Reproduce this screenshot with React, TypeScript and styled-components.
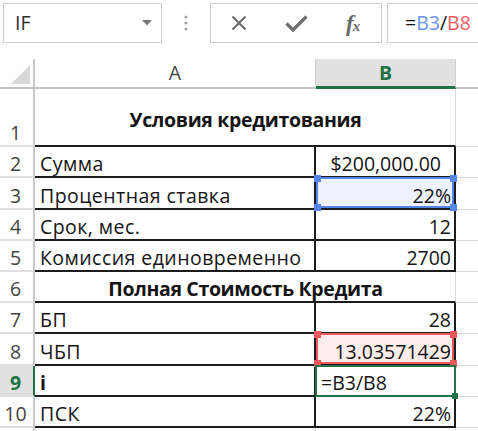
import React from "react";
import styled, { createGlobalStyle } from "styled-components";

type Border = "black" | "grid" | "none";
type Sel = "blue" | "red" | "green";

const GREEN = "#217346";

const GlobalStyle = createGlobalStyle`
  html, body {
    margin: 0;
    padding: 0;
    background: #fff;
    overflow: hidden;
  }
  body {
    font-family: "Open Sans", "Liberation Sans", Arial, sans-serif;
  }
`;

const Page = styled.div`
  width: 478px;
  height: 431px;
  overflow: hidden;
  background: #fff;
  color: #141414;
  font-size: 19.5px;
  line-height: 24px;
`;

const Toolbar = styled.div`
  display: flex;
  align-items: flex-start;
  height: 59px;
  box-sizing: border-box;
  padding: 3px 0 0 3px;
`;

const Box = styled.div`
  box-sizing: border-box;
  height: 40px;
  border: 1.5px solid #cfcfcf;
  display: flex;
  align-items: center;
  background: #fff;
`;

const NameBox = styled(Box)`
  width: 159px;
  flex: none;
  justify-content: space-between;
  padding: 0 9px 0 11px;
  color: #2e2e2e;
`;

const Dots = styled.div`
  width: 48px;
  height: 40px;
  flex: none;
  display: flex;
  align-items: center;
  justify-content: center;
`;

const FxBox = styled(Box)`
  width: 172px;
  flex: none;
`;

const FxSlot = styled.div`
  width: 58px;
  display: flex;
  justify-content: center;
  align-items: center;
  color: #6e6e6e;
`;

const FxText = styled.span`
  font-family: "Liberation Serif", "Times New Roman", serif;
  font-style: italic;
  font-weight: 700;
  font-size: 23px;
  line-height: 1;
  color: #6a6a6a;
  letter-spacing: -1px;
`;

const FxSub = styled.span`
  font-size: 15px;
`;

const FormulaBox = styled(Box)`
  flex: none;
  width: 120px;
  margin-left: 5px;
  padding-left: 17px;
  border-right: none;
`;

const Ref = styled.span<{ $color: string }>`
  color: ${(p) => p.$color};
`;

const Sheet = styled.div`
  display: grid;
  grid-template-columns: 35px 281px 140px 60px;
  grid-template-rows: 30px 58px 31px 32px 31px 31px 31px 31px 32px 31px 31px 31px;
`;

const Corner = styled.div`
  box-sizing: border-box;
  border-right: 2px solid #c8c8c8;
  border-bottom: 2px solid #c4c4c4;
  display: flex;
  align-items: flex-end;
  justify-content: flex-end;
  padding: 0 3px 3px 0;
`;

const ColHead = styled.div<{ $active?: boolean; $last?: boolean }>`
  box-sizing: border-box;
  display: flex;
  align-items: center;
  justify-content: center;
  background: ${(p) => (p.$active ? "#e1e1e1" : "#fff")};
  border-right: ${(p) => (p.$last ? "none" : "1px solid #d0d0d0")};
  border-bottom: ${(p) => (p.$active ? `3px solid ${GREEN}` : "2px solid #c4c4c4")};
  color: ${(p) => (p.$active ? GREEN : "#444")};
  font-weight: ${(p) => (p.$active ? 700 : 400)};
  padding-top: ${(p) => (p.$active ? "1px" : "0")};
`;

const RowHead = styled.div<{ $active?: boolean }>`
  box-sizing: border-box;
  display: flex;
  align-items: flex-end;
  justify-content: center;
  padding: 0 2px 0 0;
  background: ${(p) => (p.$active ? "#e1e1e1" : "#fff")};
  border-right: 2px solid ${(p) => (p.$active ? GREEN : "#c8c8c8")};
  border-bottom: 2px solid #e0e0e0;
  color: ${(p) => (p.$active ? GREEN : "#444")};
  font-weight: ${(p) => (p.$active ? 700 : 400)};
`;

const borderFor = (b?: Border) =>
  b === "black" ? "2px solid #1c1c1c" : b === "grid" ? "1px solid #dadada" : "none";

const Cell = styled.div<{
  $right?: Border;
  $bottom?: Border;
  $align?: "left" | "right" | "center";
  $bold?: boolean;
  $span?: number;
  $bg?: string;
  $center?: boolean;
  $padRight?: number;
  $spacing?: number;
}>`
  position: relative;
  box-sizing: border-box;
  display: flex;
  align-items: ${(p) => (p.$center ? "center" : "flex-end")};
  justify-content: ${(p) =>
    p.$align === "right" ? "flex-end" : p.$align === "center" ? "center" : "flex-start"};
  grid-column: span ${(p) => p.$span ?? 1};
  padding: ${(p) => (p.$center ? "5px" : "0")} ${(p) => p.$padRight ?? 4}px 0 5px;
  background: ${(p) => p.$bg ?? "#fff"};
  border-right: ${(p) => borderFor(p.$right)};
  border-bottom: ${(p) => borderFor(p.$bottom)};
  font-weight: ${(p) => (p.$bold ? 700 : 400)};
  letter-spacing: ${(p) => p.$spacing ?? 0}px;
  white-space: nowrap;
`;

const selColors: Record<Sel, string> = {
  blue: "#5585e8",
  red: "#e9585b",
  green: GREEN,
};

const selFill: Record<Sel, string> = {
  blue: "#edf2fd",
  red: "#fdeded",
  green: "#fff",
};

const Overlay = styled.div<{ $sel: Sel }>`
  position: absolute;
  z-index: 2;
  pointer-events: none;
  top: -1px;
  left: ${(p) => (p.$sel === "green" ? "-1px" : "0")};
  right: ${(p) => (p.$sel === "green" ? "-2px" : "0")};
  bottom: ${(p) => (p.$sel === "green" ? "-2px" : "0")};
  border: 2px solid ${(p) => selColors[p.$sel]};
`;

const Handle = styled.span<{ $sel: Sel; $v: "top" | "bottom"; $h: "left" | "right" }>`
  position: absolute;
  width: ${(p) => (p.$sel === "green" ? 6 : 7)}px;
  height: ${(p) => (p.$sel === "green" ? 6 : 7)}px;
  background: ${(p) => selColors[p.$sel]};
  ${(p) => p.$v}: ${(p) => (p.$sel === "green" ? -4 : -4.5)}px;
  ${(p) => p.$h}: ${(p) => (p.$sel === "green" ? -4 : -4.5)}px;
`;

const Selection = ({ sel }: { sel: Sel }) => (
  <Overlay $sel={sel}>
    {sel === "green" ? (
      <Handle $sel={sel} $v="bottom" $h="right" />
    ) : (
      <>
        <Handle $sel={sel} $v="top" $h="left" />
        <Handle $sel={sel} $v="top" $h="right" />
        <Handle $sel={sel} $v="bottom" $h="left" />
        <Handle $sel={sel} $v="bottom" $h="right" />
      </>
    )}
  </Overlay>
);

interface Row {
  n: number;
  title?: string;
  a?: string;
  b?: string;
  boldA?: boolean;
  edit?: boolean;
  sel?: Sel;
  padRight?: number;
}

const rows: Row[] = [
  { n: 1, title: "Условия кредитования" },
  { n: 2, a: "Сумма", b: "$200,000.00", padRight: 13 },
  { n: 3, a: "Процентная ставка", b: "22%", sel: "blue" },
  { n: 4, a: "Срок, мес.", b: "12" },
  { n: 5, a: "Комиссия единовременно", b: "2700" },
  { n: 6, title: "Полная Стоимость Кредита" },
  { n: 7, a: "БП", b: "28" },
  { n: 8, a: "ЧБП", b: "13.03571429", sel: "red" },
  { n: 9, a: "i", b: "=B3/B8", sel: "green", edit: true, boldA: true },
  { n: 10, a: "ПСК", b: "22%" },
  { n: 11 },
];

export default function App() {
  return (
    <Page>
      <GlobalStyle />
      <Toolbar>
        <NameBox>
          <span>IF</span>
          <svg width="10" height="6" viewBox="0 0 10 6">
            <polygon points="0,0 10,0 5,5.5" fill="#7a7a7a" />
          </svg>
        </NameBox>
        <Dots>
          <svg width="4" height="16" viewBox="0 0 4 16">
            <circle cx="2" cy="2" r="1.6" fill="#a3a3a3" />
            <circle cx="2" cy="8" r="1.6" fill="#a3a3a3" />
            <circle cx="2" cy="14" r="1.6" fill="#a3a3a3" />
          </svg>
        </Dots>
        <FxBox>
          <FxSlot>
            <svg width="16" height="16" viewBox="0 0 16 16">
              <path d="M1.5 1.5 L14.5 14.5 M14.5 1.5 L1.5 14.5" stroke="#6e6e6e" strokeWidth="2.2" />
            </svg>
          </FxSlot>
          <FxSlot>
            <svg width="23" height="17" viewBox="0 0 23 17">
              <path d="M1.5 8.5 L8 15 L21.5 1.5" stroke="#6e6e6e" strokeWidth="3.2" fill="none" />
            </svg>
          </FxSlot>
          <FxSlot>
            <FxText>
              f<FxSub>x</FxSub>
            </FxText>
          </FxSlot>
        </FxBox>
        <FormulaBox>
          <span>
            =<Ref $color="#6a95ee">B3</Ref>/<Ref $color="#ef5b5e">B8</Ref>
          </span>
        </FormulaBox>
      </Toolbar>

      <Sheet>
        <Corner>
          <svg width="19" height="19" viewBox="0 0 19 19">
            <polygon points="19,0 19,19 0,19" fill="#d8d8d8" />
          </svg>
        </Corner>
        <ColHead>A</ColHead>
        <ColHead $active>B</ColHead>
        <ColHead $last />

        {rows.map((r) => (
          <React.Fragment key={r.n}>
            <RowHead $active={r.n === 9}>{r.a || r.title ? r.n : null}</RowHead>
            {r.title ? (
              <Cell
                $span={2}
                $align="center"
                $bold
                $spacing={-0.35}
                $right="grid"
                $bottom="black"
                $center={r.n === 1}
              >
                {r.title}
              </Cell>
            ) : r.a ? (
              <>
                <Cell $right="black" $bottom="black" $bold={r.boldA} $spacing={0.45}>
                  {r.a}
                </Cell>
                <Cell
                  $right="black"
                  $bottom="black"
                  $align={r.edit ? "left" : "right"}
                  $padRight={r.padRight ?? 3}
                  $bg={r.sel ? selFill[r.sel] : undefined}
                >
                  {r.b}
                  {r.sel && <Selection sel={r.sel} />}
                </Cell>
              </>
            ) : (
              <>
                <Cell $right="grid" $bottom="grid" />
                <Cell $right="grid" $bottom="grid" />
              </>
            )}
            <Cell $bottom="grid" />
          </React.Fragment>
        ))}
      </Sheet>
    </Page>
  );
}
